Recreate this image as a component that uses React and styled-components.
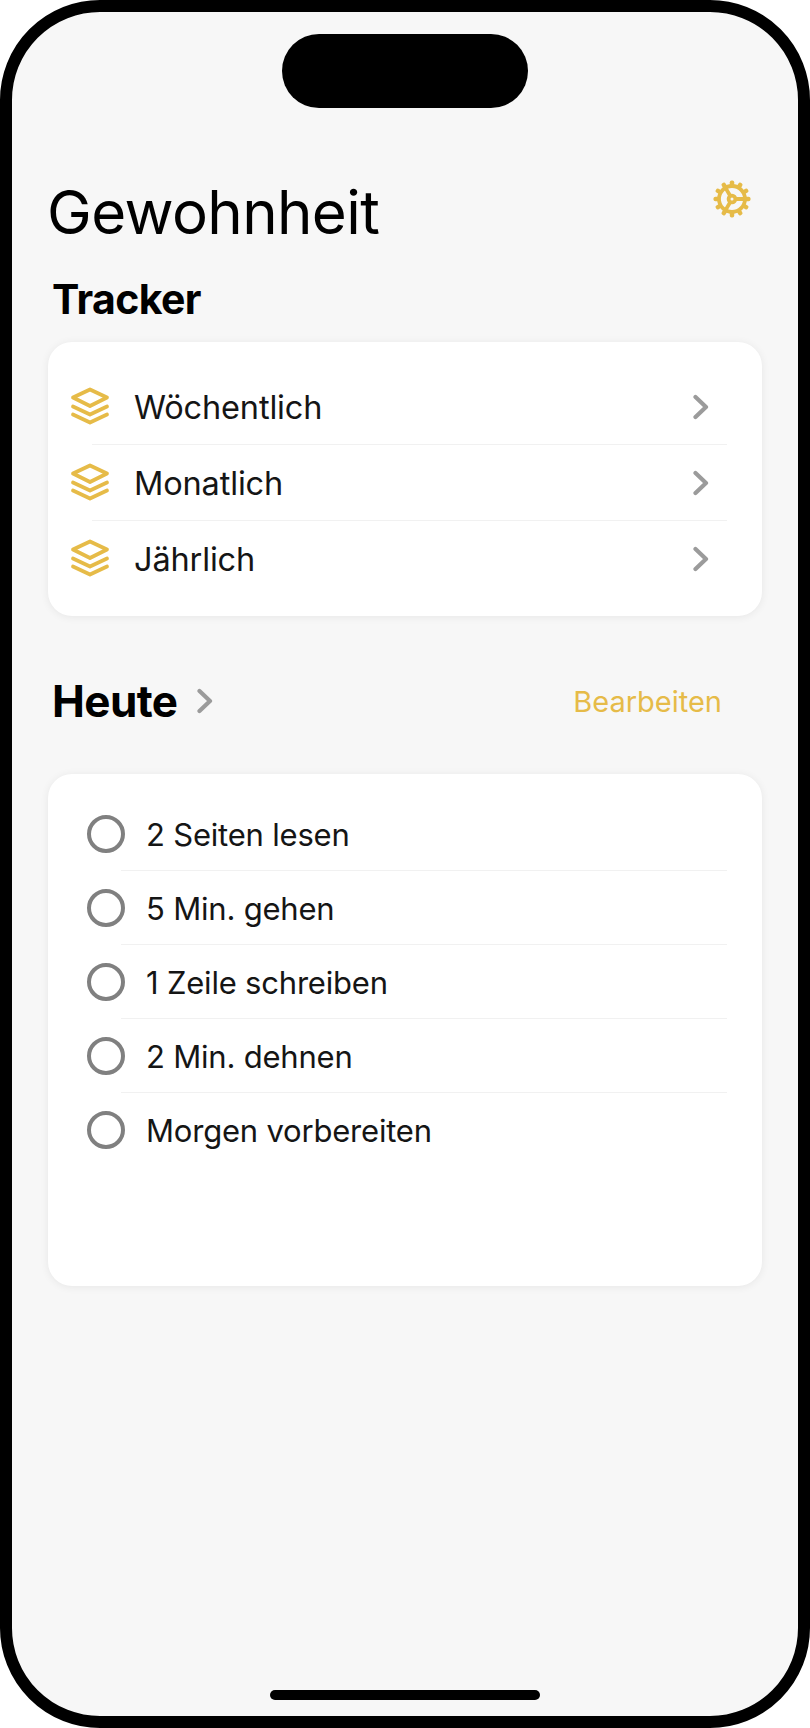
import React from 'react'
import styled, { createGlobalStyle } from 'styled-components'

const gold = '#e6bb48'

const GlobalStyle = createGlobalStyle`
   html, body {
      margin: 0;
      padding: 0;
      background: #fff;
   }
   * {
      box-sizing: border-box;
   }
`

const Phone = styled.div`
   position: relative;
   width: 810px;
   height: 1728px;
   background: #f7f7f7;
   border: 12px solid #000;
   border-radius: 100px;
   font-family: Inter, "Liberation Sans", sans-serif;
   overflow: hidden;
   padding: 0 36px;
`

const Notch = styled.div`
   position: absolute;
   top: 22px;
   left: 270px;
   width: 246px;
   height: 74px;
   border-radius: 37px;
   background: #000;
`

const HomeBar = styled.div`
   position: absolute;
   bottom: 16px;
   left: 258px;
   width: 270px;
   height: 10px;
   border-radius: 5px;
   background: #000;
`

const Header = styled.header`
   display: flex;
   justify-content: space-between;
   align-items: flex-start;
   box-sizing: content-box;
   height: 70px;
   padding-top: 165px;
   padding-right: 11px;
`

const Title = styled.h1`
   margin: 0 0 0 -1px;
   font-size: 60px;
   line-height: 70px;
   font-weight: 400;
   letter-spacing: -0.6px;
   color: #000;
`

const GearWrap = styled.div`
   width: 38px;
   height: 38px;
   margin-top: 3px;
`

const SectionTitle = styled.h2`
   margin: 0 0 0 4px;
   font-size: ${({ $size }) => $size}px;
   line-height: 48px;
   font-weight: 700;
   letter-spacing: -0.6px;
   color: #000;
`

const TrackerHead = styled.div`
   margin-top: 28px;
   margin-bottom: 19px;
`

const Card = styled.section`
   height: ${({ $height }) => $height}px;
   padding-top: ${({ $top }) => $top}px;
   background: #fff;
   border-radius: 24px;
   box-shadow: 0 1px 9px rgba(0, 0, 0, 0.07);
`

const Row = styled.div`
   position: relative;
   display: flex;
   align-items: center;
   height: ${({ $height }) => $height}px;
   padding-left: ${({ $pad }) => $pad}px;
   padding-right: 53px;
   &:not(:last-child)::after {
      content: "";
      position: absolute;
      left: ${({ $line }) => $line}px;
      right: 35px;
      bottom: 0;
      height: 1.5px;
      background: #f1f1f1;
   }
`

const RowLabel = styled.span`
   flex: 1;
   font-size: ${({ $size }) => $size}px;
   line-height: 40px;
   letter-spacing: ${({ $spacing }) => $spacing}px;
   color: #151515;
   margin-left: ${({ $gap }) => $gap}px;
   padding-top: 2px;
`

const Ring = styled.span`
   flex: none;
   width: 38px;
   height: 38px;
   border: 4px solid #808080;
   border-radius: 50%;
`

const TodayHead = styled.div`
   display: flex;
   align-items: center;
   margin-top: 50px;
   margin-bottom: 44px;
   height: 64px;
   padding-top: 6px;
   padding-right: 40px;
`

const EditLink = styled.span`
   margin-left: auto;
   font-size: 29px;
   color: ${gold};
`

const Chevron = ({ margin = 0 }) => (
   <svg width="16" height="26" viewBox="0 0 16 26" style={{ flex: 'none', marginLeft: margin, marginTop: -1 }}>
      <path d="M2.5 3 L13 13 L2.5 23" fill="none" stroke="#9b9b9b" strokeWidth="4.2" strokeLinecap="round" strokeLinejoin="round" />
   </svg>
)

const Stack = () => (
   <svg width="40" height="38" viewBox="0 0 40 38" style={{ flex: 'none', marginTop: -2 }}>
      <g fill="none" stroke={gold} strokeWidth="3.8" strokeLinecap="round" strokeLinejoin="round">
         <path d="M20 2.5 L37 10.5 L20 19 L3 10.5 Z" />
         <path d="M3 19.5 L20 27.5 L37 19.5" />
         <path d="M3 27.5 L20 35.5 L37 27.5" />
      </g>
   </svg>
)

const teeth = [0, 30, 60, 90, 120, 150, 180, 210, 240, 270, 300, 330]

const Gear = () => (
   <svg width="38" height="38" viewBox="0 0 38 38">
      <g fill={gold}>
         {teeth.map((deg) => (
            <rect key={deg} x="16.8" y="0.5" width="4.4" height="6" rx="1.8" transform={`rotate(${deg} 19 19)`} />
         ))}
      </g>
      <g fill="none" stroke={gold} strokeWidth="3.8">
         <circle cx="19" cy="19" r="13" />
         <circle cx="19" cy="19" r="3.4" />
         <path d="M22.4 19 H32 M17.3 16 L12.4 7.6 M17.3 22 L12.4 30.4" />
      </g>
   </svg>
)

const trackers = ['Wöchentlich', 'Monatlich', 'Jährlich']
const habits = ['2 Seiten lesen', '5 Min. gehen', '1 Zeile schreiben', '2 Min. dehnen', 'Morgen vorbereiten']

const App = () => (
   <Phone>
      <GlobalStyle />
      <Notch />
      <Header>
         <Title>Gewohnheit</Title>
         <GearWrap>
            <Gear />
         </GearWrap>
      </Header>
      <TrackerHead>
         <SectionTitle $size={41}>Tracker</SectionTitle>
      </TrackerHead>
      <Card $height={274} $top={27}>
         {trackers.map((name) => (
            <Row key={name} $height={76} $pad={22} $line={44}>
               <Stack />
               <RowLabel $gap={24} $size={32.5} $spacing={-0.15}>{name}</RowLabel>
               <Chevron />
            </Row>
         ))}
      </Card>
      <TodayHead>
         <SectionTitle $size={44}>Heute</SectionTitle>
         <Chevron margin={20} />
         <EditLink>Bearbeiten</EditLink>
      </TodayHead>
      <Card $height={512} $top={23}>
         {habits.map((name) => (
            <Row key={name} $height={74} $pad={39} $line={73}>
               <Ring />
               <RowLabel $gap={21} $size={31} $spacing={-0.2}>{name}</RowLabel>
            </Row>
         ))}
      </Card>
      <HomeBar />
   </Phone>
)

export default App
